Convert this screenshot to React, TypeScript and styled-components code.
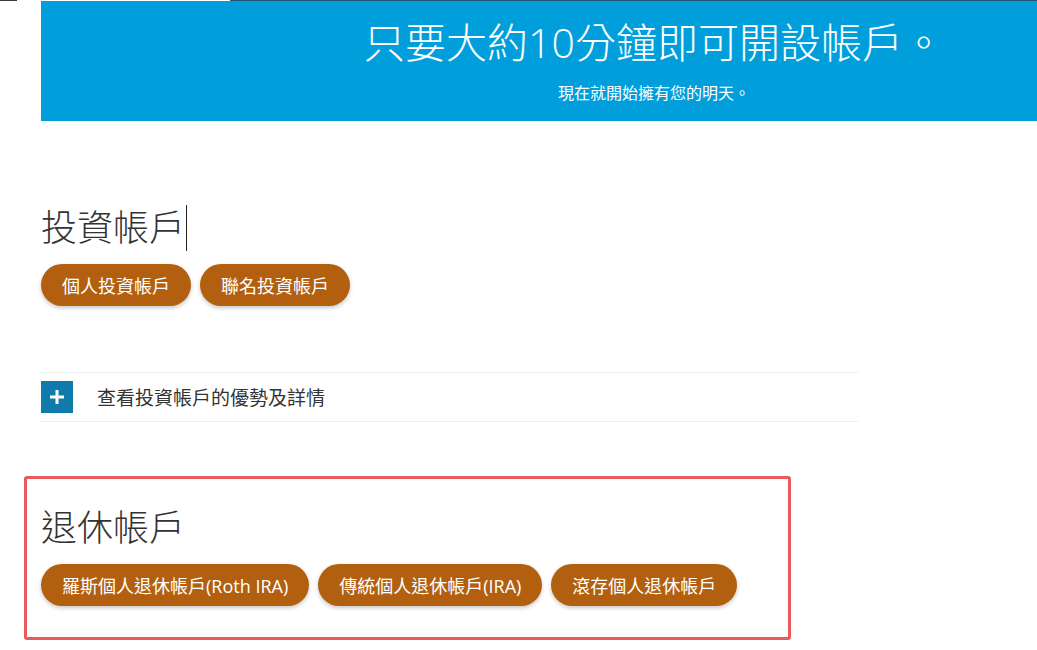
import React from "react";
import styled, { createGlobalStyle } from "styled-components";

const GlobalStyle = createGlobalStyle`
  html, body {
    margin: 0;
    padding: 0;
    background: #ffffff;
    overflow: hidden;
  }

  body {
    font-family: "Open Sans", "Noto Sans CJK TC", sans-serif;
    color: #333333;
  }
`;

const Page = styled.div`
  width: 1037px;
  height: 650px;
  overflow: hidden;
`;

const TopStrip = styled.div`
  display: flex;
  height: 1px;
`;

const StripSegment = styled.div<{ $width?: number; $color: string }>`
  flex: ${(props) => (props.$width ? `0 0 ${props.$width}px` : "1 1 auto")};
  background: ${(props) => props.$color};
`;

const Banner = styled.header`
  box-sizing: border-box;
  margin-left: 41px;
  width: 1226px;
  height: 120px;
  padding-top: 16px;
  background: #009fdb;
  color: #ffffff;
  display: flex;
  flex-direction: column;
  align-items: center;
  gap: 15px;
`;

const BannerTitle = styled.h1`
  margin: 0;
  font-size: 41px;
  line-height: 50px;
  font-weight: 300;
  white-space: nowrap;
`;

const BannerSubtitle = styled.p`
  margin: 0;
  font-size: 16px;
  line-height: 22px;
  font-weight: 400;
`;

const Main = styled.main`
  padding-left: 41px;
  padding-top: 84px;
`;

const Section = styled.section`
  display: flex;
  flex-direction: column;
  gap: 13px;
`;

const Highlighted = styled(Section)`
  box-sizing: border-box;
  width: 767px;
  margin: 54px 0 0 -17px;
  padding: 26px 0 31px 14px;
  border: 3px solid #e95a5c;
  border-radius: 3px;
`;

const Heading = styled.h2`
  margin: 0;
  height: 46px;
  font-size: 36px;
  line-height: 46px;
  font-weight: 300;
  color: #333333;
  display: flex;
  align-items: center;
`;

const Caret = styled.span`
  display: inline-block;
  width: 1px;
  height: 46px;
  margin-left: 1px;
  background: #222222;
`;

const ButtonRow = styled.div`
  display: flex;
  gap: 9px;
`;

const PillButton = styled.button`
  height: 42px;
  padding: 0 21px;
  border: none;
  border-radius: 21px;
  background: #b25f0f;
  color: #ffffff;
  font-family: "Open Sans", "Noto Sans CJK TC", sans-serif;
  font-size: 18px;
  white-space: nowrap;
  box-shadow: 0 2px 4px rgba(0, 0, 0, 0.22);
  cursor: pointer;
`;

const Disclosure = styled.div`
  width: 817px;
  margin-top: 66px;
  padding: 8px 0;
  border-top: 1px dotted #d9d9d9;
  border-bottom: 1px dotted #d9d9d9;
  display: flex;
  align-items: center;
  gap: 24px;
`;

const PlusBox = styled.span`
  width: 32px;
  height: 32px;
  background: #0f7aab;
  display: flex;
  align-items: center;
  justify-content: center;
`;

const DisclosureText = styled.span`
  font-size: 19px;
  color: #333333;
`;

const PlusIcon = () => (
  <svg width="18" height="18" viewBox="0 0 18 18">
    <path d="M9 2v14M2 9h14" stroke="#ffffff" strokeWidth="3" />
  </svg>
);

const investmentAccounts = ["個人投資帳戶", "聯名投資帳戶"];
const retirementAccounts = [
  "羅斯個人退休帳戶(Roth IRA)",
  "傳統個人退休帳戶(IRA)",
  "滾存個人退休帳戶",
];

export default function App() {
  return (
    <Page>
      <GlobalStyle />
      <TopStrip>
        <StripSegment $width={17} $color="#3a3a3a" />
        <StripSegment $width={213} $color="transparent" />
        <StripSegment $color="#1b5675" />
      </TopStrip>
      <Banner>
        <BannerTitle>只要大約10分鐘即可開設帳戶。</BannerTitle>
        <BannerSubtitle>現在就開始擁有您的明天。</BannerSubtitle>
      </Banner>
      <Main>
        <Section>
          <Heading>
            投資帳戶
            <Caret />
          </Heading>
          <ButtonRow>
            {investmentAccounts.map((label) => (
              <PillButton key={label}>{label}</PillButton>
            ))}
          </ButtonRow>
        </Section>
        <Disclosure>
          <PlusBox>
            <PlusIcon />
          </PlusBox>
          <DisclosureText>查看投資帳戶的優勢及詳情</DisclosureText>
        </Disclosure>
        <Highlighted>
          <Heading>退休帳戶</Heading>
          <ButtonRow>
            {retirementAccounts.map((label) => (
              <PillButton key={label}>{label}</PillButton>
            ))}
          </ButtonRow>
        </Highlighted>
      </Main>
    </Page>
  );
}
